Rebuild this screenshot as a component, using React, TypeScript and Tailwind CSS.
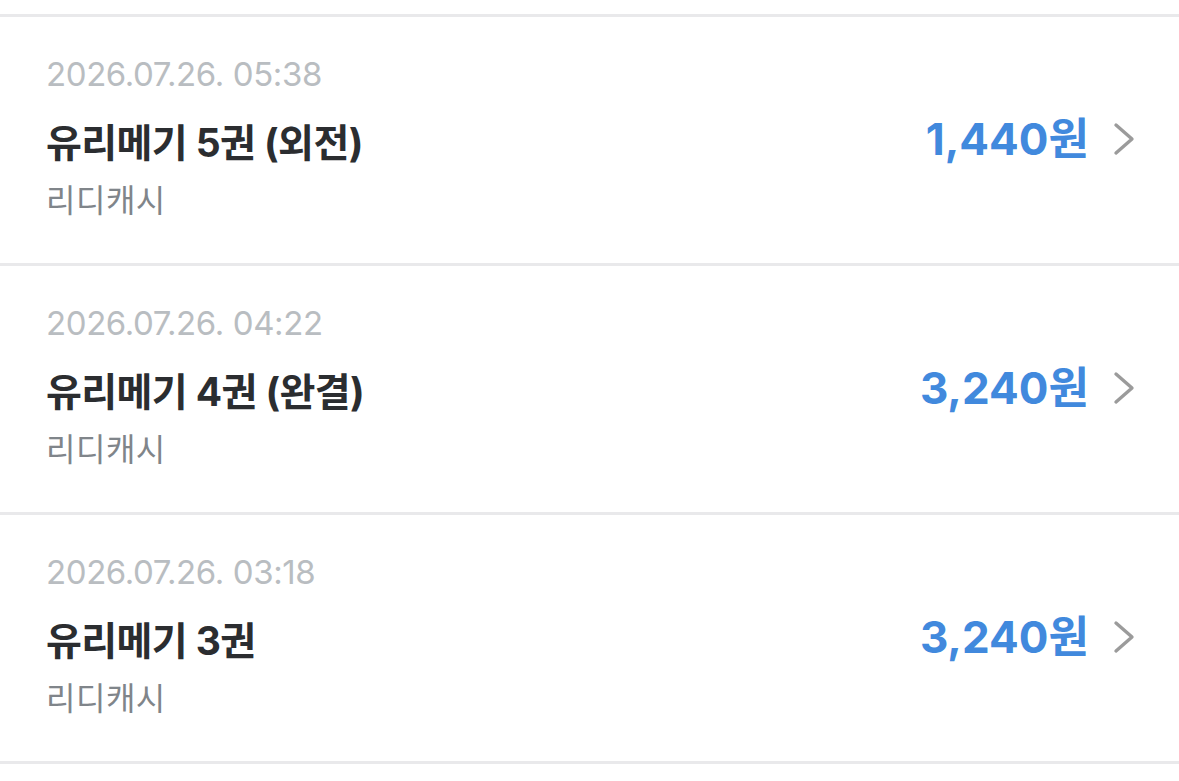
type Purchase = {
  date: string;
  title: string;
  method: string;
  amount: string;
};

const purchases: Purchase[] = [
  { date: '2026.07.26. 05:38', title: '유리메기 5권 (외전)', method: '리디캐시', amount: '1,440원' },
  { date: '2026.07.26. 04:22', title: '유리메기 4권 (완결)', method: '리디캐시', amount: '3,240원' },
  { date: '2026.07.26. 03:18', title: '유리메기 3권', method: '리디캐시', amount: '3,240원' },
];

const font = { fontFamily: "Inter, 'Noto Sans CJK KR', 'Noto Sans', sans-serif" };

function Chevron() {
  return (
    <svg width="22" height="34" viewBox="0 0 22 34" fill="none" className="shrink-0">
      <polyline
        points="3,3 19,17 3,31"
        stroke="#9b9b9b"
        strokeWidth="3.4"
        strokeLinecap="round"
        strokeLinejoin="round"
      />
    </svg>
  );
}

function PurchaseRow({ item }: { item: Purchase }) {
  return (
    <li className="flex justify-between border-t-[3px] border-[#e9e9eb] pl-[46px] pr-[44px] pt-[37px] h-[249px]">
      <div className="flex flex-col">
        <span className="text-[33px] leading-[40px] text-[#b9bdc1] tracking-[-0.4px]">{item.date}</span>
        <span className="mt-[25px] text-[39px] leading-[48px] font-bold text-[#2b2d30] tracking-[-0.6px]">
          {item.title}
        </span>
        <span className="mt-[14px] text-[32px] leading-[40px] text-[#80858a] tracking-[0.5px]">{item.method}</span>
      </div>
      <div className="flex items-center gap-[24px] self-center -mt-[40px]">
        <span className="text-[44px] leading-[52px] font-bold text-[#4189dd]">{item.amount}</span>
        <Chevron />
      </div>
    </li>
  );
}

export default function App() {
  return (
    <div className="w-[1179px] h-[781px] bg-white overflow-hidden" style={font}>
      <div className="h-[14px]" />
      <ul className="border-b-[3px] border-[#e9e9eb]">
        {purchases.map((p) => (
          <PurchaseRow key={p.date} item={p} />
        ))}
      </ul>
    </div>
  );
}
